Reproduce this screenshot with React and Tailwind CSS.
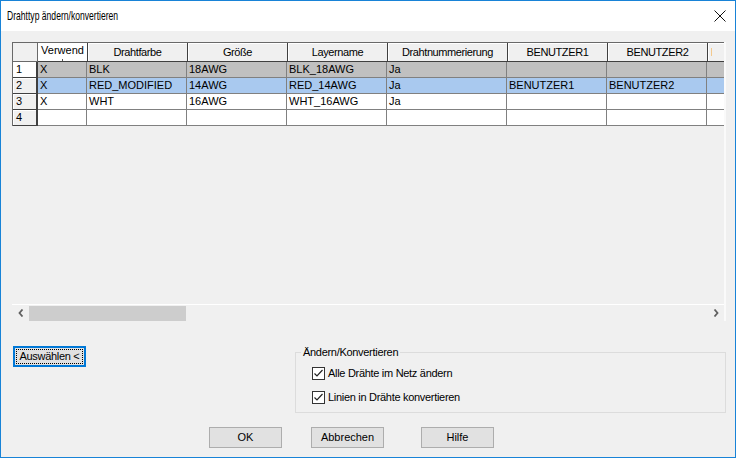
import React from "react";

const cols = [
  { w: 50, h: "Verwend" },
  { w: 100, h: "Drahtfarbe" },
  { w: 100, h: "Größe" },
  { w: 100, h: "Layername" },
  { w: 120, h: "Drahtnummerierung" },
  { w: 100, h: "BENUTZER1" },
  { w: 100, h: "BENUTZER2" },
  { w: 100, h: "" },
];

const rows = [
  { n: "1", bg: "bg-[#c0c0c0]", cells: ["X", "BLK", "18AWG", "BLK_18AWG", "Ja", "", "", ""] },
  { n: "2", bg: "bg-[#a9c9ef]", cells: ["X", "RED_MODIFIED", "14AWG", "RED_14AWG", "Ja", "BENUTZER1", "BENUTZER2", ""] },
  { n: "3", bg: "bg-white", cells: ["X", "WHT", "16AWG", "WHT_16AWG", "Ja", "", "", ""] },
  { n: "4", bg: "bg-white", cells: ["", "", "", "", "", "", "", ""] },
];

function Check() {
  return (
    <span className="w-[13px] h-[13px] border border-[#333] bg-white flex items-center justify-center shrink-0">
      <svg width="11" height="11" viewBox="0 0 11 11">
        <path d="M1.5 5.5 L4 8 L9.5 2" fill="none" stroke="#222" strokeWidth="1.2" />
      </svg>
    </span>
  );
}

function Btn({ children, cls = "" }) {
  return (
    <div className={"w-[73px] h-[21px] bg-[#e1e1e1] border border-[#adadad] flex items-center justify-center text-[11px] text-black " + cls}>
      {children}
    </div>
  );
}

export default function App() {
  return (
    <div
      className="w-[736px] h-[458px] bg-[#f0f0f0] border border-[#1883d7] flex flex-col overflow-hidden text-black"
      style={{ fontFamily: '"Liberation Sans", Arial, sans-serif' }}
    >
      {/* title bar */}
      <div className="h-[30px] bg-white flex items-center justify-between pl-[6px] pr-[9px] shrink-0">
        <span className="text-[13px] scale-x-[0.66] origin-left whitespace-nowrap">
          Drahttyp ändern/konvertieren
        </span>
        <svg width="12" height="12" viewBox="0 0 12 12">
          <path d="M0.5 0.5 L11.5 11.5 M11.5 0.5 L0.5 11.5" stroke="#111" strokeWidth="1" fill="none" />
        </svg>
      </div>

      <div className="flex-1 flex flex-col pl-[11px] pr-[9px] pt-[11px]">
        {/* grid control */}
        <div className="h-[279px] flex flex-col border-r-2 border-r-[#fafafa] shrink-0">
          <div className="flex-1 overflow-hidden">
            <div className="flex flex-col w-max text-[11px] border-l border-t border-[#696969]">
              {/* header */}
              <div className="flex h-[19px]">
                <div className="w-[25px] h-full bg-[#f0f0f0] border-r border-b border-[#696969]" />
                {cols.map((c, i) => (
                  <div
                    key={i}
                    style={{ width: c.w }}
                    className={
                      "h-full border-r border-b border-[#404040] shadow-[inset_1px_1px_0_#ffffff] flex justify-center overflow-hidden leading-[12px] relative " +
                      (i === 0 ? "bg-white items-start pt-[1px]" : "bg-[#f0f0f0] items-center")
                    }
                  >
                    {i === 0 ? (
                      <>
                        <span className="text-[11px] leading-[12px]">Verwend</span>
                        <span className="absolute left-[24px] bottom-0 w-[1px] h-[2px] bg-[#555]" />
                      </>
                    ) : (
                      <span className="tracking-[-0.4px]">{c.h}</span>
                    )}
                    {i === 7 && <span className="absolute left-[3px] top-[5px] w-[1px] h-[8px] bg-[#f3c98e]" />}
                  </div>
                ))}
              </div>
              {rows.map((r) => (
                <div key={r.n} className="flex h-[16px]">
                  <div
                    className={
                      "w-[25px] h-full border-r-2 border-b border-[#404040] pl-[3px] flex items-center shadow-[inset_1px_1px_0_#ffffff] " +
                      (r.n === "1" ? "bg-white" : "bg-[#f0f0f0]")
                    }
                  >
                    {r.n}
                  </div>
                  {cols.map((c, i) => (
                    <div
                      key={i}
                      style={{ width: i === 0 ? c.w - 1 : c.w }}
                      className={"h-full border-r border-b border-[#808080] pl-[2px] flex items-center whitespace-nowrap overflow-hidden " + r.bg}
                    >
                      {r.cells[i]}
                    </div>
                  ))}
                </div>
              ))}
            </div>
          </div>
          {/* scrollbar */}
          <div className="h-[17px] border-t border-white flex items-center shrink-0">
            <div className="w-[17px] flex items-center justify-center">
              <svg width="6" height="8" viewBox="0 0 6 8">
                <path d="M4.5 0.5 L1.5 4 L4.5 7.5" stroke="#606060" strokeWidth="1.8" fill="none" />
              </svg>
            </div>
            <div className="w-[157px] h-[15px] bg-[#cdcdcd]" />
            <div className="flex-1" />
            <div className="w-[17px] flex items-center justify-center">
              <svg width="6" height="8" viewBox="0 0 6 8">
                <path d="M1.5 0.5 L4.5 4 L1.5 7.5" stroke="#606060" strokeWidth="1.8" fill="none" />
              </svg>
            </div>
          </div>
        </div>

        {/* lower area */}
        <div className="flex items-start">
          <div className="mt-[25px] ml-[1px] w-[73px] h-[21px] border-2 border-[#0078d7] bg-[#e1e1e1] p-[1px] shrink-0">
            <div className="w-full h-full border border-dotted border-black flex items-center justify-center text-[11px] tracking-[-0.3px]">
              Auswählen &lt;
            </div>
          </div>
          <fieldset className="ml-[209px] mt-[25px] w-[432px] h-[67px] border border-[#dcdcdc] p-0 m-0 min-w-0">
            <legend className="ml-[5px] px-[2px] text-[11px] leading-[13px] tracking-[-0.3px]">Ändern/Konvertieren</legend>
            <div className="pl-[16px]">
              <div className="flex items-center gap-[3px] h-[13px] mt-[8px] text-[11px] tracking-[-0.3px]">
                <Check />
                <span>Alle Drähte im Netz ändern</span>
              </div>
              <div className="flex items-center gap-[3px] h-[13px] mt-[11px] text-[11px] tracking-[-0.3px]">
                <Check />
                <span>Linien in Drähte konvertieren</span>
              </div>
            </div>
          </fieldset>
        </div>

        <div className="flex mt-[14px] pl-[197px]">
          <Btn>OK</Btn>
          <Btn cls="ml-[29px]">Abbrechen</Btn>
          <Btn cls="ml-[37px]">Hilfe</Btn>
        </div>
      </div>
    </div>
  );
}
